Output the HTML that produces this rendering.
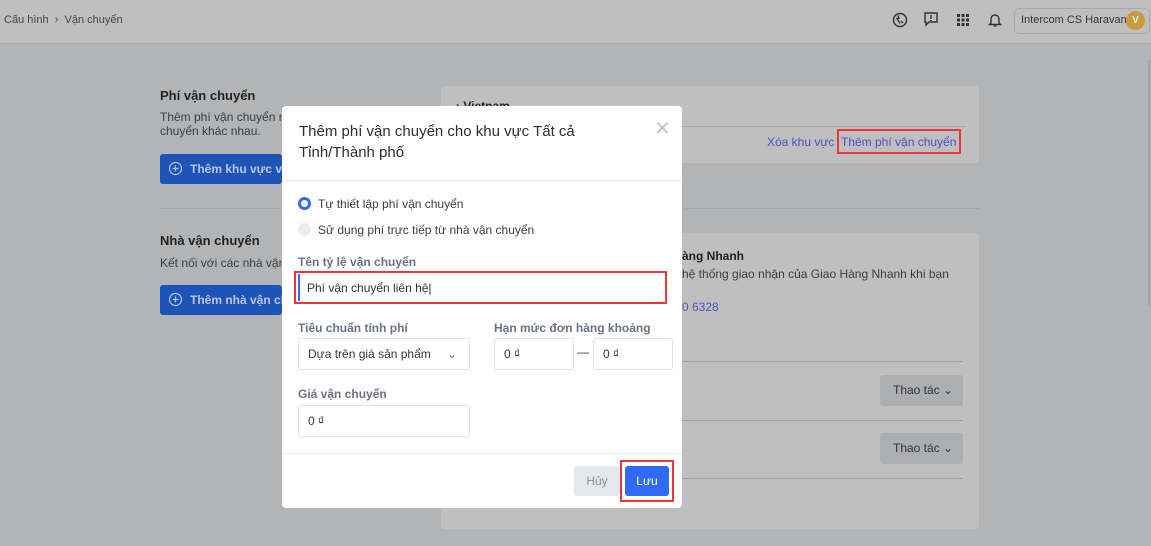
<!DOCTYPE html>
<html><head><meta charset="utf-8"><style>
*{box-sizing:border-box;margin:0;padding:0}
body{width:1151px;height:546px;overflow:hidden;background:#b3b4b6;font-family:"Liberation Sans","DejaVu Sans",sans-serif;position:relative;color:#1f2329}
.a{position:absolute}
.hdr{left:0;top:0;width:1151px;height:44px;background:#bfbfbf;border-bottom:1px solid #a9aaac}
.card{background:#bfbfbf;border-radius:4px}
.t{font-size:12px;color:#3a3d42}
.btn{background:#1e54b8;color:#b8c6e6;font-weight:bold;font-size:12px;border-radius:3px;height:30px;line-height:30px;padding-left:30px;overflow:hidden}
.modal{left:282px;top:106px;width:400px;height:402px;background:#fff;border-radius:4px}
.lbl{font-size:12px;font-weight:bold;color:#6a7283}
.inp{border:1px solid #dfe3e8;border-radius:3px;height:32px;font-size:12px;line-height:30px;padding-left:9px;color:#333}
</style></head><body>
<div class="a hdr"></div>
<div class="a t" style="left:4px;top:14px;font-size:11px;color:#444">Cấu hình &nbsp;›&nbsp; Vận chuyển</div>
<svg class="a" style="left:892px;top:12px" width="16" height="16" viewBox="0 0 16 16"><circle cx="8" cy="8" r="6.5" fill="none" stroke="#333" stroke-width="1.4"/><path d="M6 3.5l1 3h-2l3 5M9 9l2 2" stroke="#333" stroke-width="1.3" fill="none"/></svg>
<svg class="a" style="left:923px;top:11px" width="16" height="16" viewBox="0 0 16 16"><path d="M2 2h12v9H6l-3 3v-3H2z" fill="none" stroke="#333" stroke-width="1.4"/><path d="M8 4v4M8 9v1" stroke="#333" stroke-width="1.4"/></svg>
<svg class="a" style="left:957px;top:14px" width="12" height="12" viewBox="0 0 12 12" fill="#333"><rect x="0" y="0" width="3" height="3"/><rect x="4.5" y="0" width="3" height="3"/><rect x="9" y="0" width="3" height="3"/><rect x="0" y="4.5" width="3" height="3"/><rect x="4.5" y="4.5" width="3" height="3"/><rect x="9" y="4.5" width="3" height="3"/><rect x="0" y="9" width="3" height="3"/><rect x="4.5" y="9" width="3" height="3"/><rect x="9" y="9" width="3" height="3"/></svg>
<svg class="a" style="left:988px;top:12px" width="14" height="16" viewBox="0 0 14 16"><path d="M3 11V7a4 4 0 018 0v4l1.5 1.5h-11z" fill="none" stroke="#333" stroke-width="1.4"/><path d="M5.5 14h3" stroke="#333" stroke-width="1.4"/></svg>
<div class="a" style="left:1014px;top:8px;width:136px;height:26px;border:1px solid #a8a9ab;border-radius:5px"></div>
<div class="a" style="left:1021px;top:14px;font-size:11px;color:#333">Intercom CS Haravan</div>
<div class="a" style="left:1126px;top:11px;width:19px;height:19px;border-radius:50%;background:#cc9a3e;color:#eee;font-size:10px;font-weight:bold;text-align:center;line-height:19px">V</div>

<div class="a" style="left:160px;top:88px;font-size:13px;font-weight:bold;color:#222">Phí vận chuyển</div>
<div class="a t" style="left:160px;top:110px;width:125px;line-height:14px;overflow:hidden;white-space:nowrap">Thêm phí vận chuyển m<br>chuyển khác nhau.</div>
<div class="a btn" style="left:160px;top:154px;width:122px;white-space:nowrap">Thêm khu vực vận</div>
<svg class="a" style="left:168px;top:161px" width="15" height="15" viewBox="0 0 15 15"><circle cx="7.5" cy="7.5" r="6" fill="none" stroke="#b8c6e6" stroke-width="1.2"/><path d="M7.5 4.5v6M4.5 7.5h6" stroke="#b8c6e6" stroke-width="1.2"/></svg>
<div class="a" style="left:160px;top:208px;width:122px;height:1px;background:#a4a5a7"></div>
<div class="a" style="left:160px;top:233px;font-size:13px;font-weight:bold;color:#222">Nhà vận chuyển</div>
<div class="a t" style="left:160px;top:256px;width:125px;white-space:nowrap;overflow:hidden">Kết nối với các nhà vận</div>
<div class="a btn" style="left:160px;top:285px;width:122px;white-space:nowrap">Thêm nhà vận chuyển</div>
<svg class="a" style="left:168px;top:292px" width="15" height="15" viewBox="0 0 15 15"><circle cx="7.5" cy="7.5" r="6" fill="none" stroke="#b8c6e6" stroke-width="1.2"/><path d="M7.5 4.5v6M4.5 7.5h6" stroke="#b8c6e6" stroke-width="1.2"/></svg>

<div class="a card" style="left:441px;top:86px;width:538px;height:77px"></div>
<div class="a" style="left:456px;top:99px;font-size:12px;font-weight:bold;color:#222">› Vietnam</div>
<div class="a" style="left:441px;top:126px;width:525px;height:1px;background:#a9aaac"></div>
<div class="a" style="left:767px;top:135px;font-size:12px;color:#4a52c6">Xóa khu vực</div>
<div class="a" style="left:837px;top:129px;width:124px;height:25px;border:2px solid #e8363c"></div>
<div class="a" style="left:841px;top:135px;font-size:12px;color:#4a52c6">Thêm phí vận chuyển</div>
<div class="a" style="left:441px;top:208px;width:538px;height:1px;background:#a4a5a7"></div>
<div class="a card" style="left:441px;top:233px;width:538px;height:296px"></div>
<div class="a" style="left:682px;top:249px;font-size:12px;font-weight:bold;color:#222">àng Nhanh</div>
<div class="a t" style="left:682px;top:267px">hệ thống giao nhận của Giao Hàng Nhanh khi bạn</div>
<div class="a" style="left:682px;top:300px;font-size:12px;color:#4a52c6">0 6328</div>
<div class="a" style="left:441px;top:361px;width:522px;height:1px;background:#a0a1a3"></div>
<div class="a" style="left:880px;top:375px;width:83px;height:31px;background:#adaeb0;border-radius:3px;font-size:12px;color:#333;line-height:31px;padding-left:13px">Thao tác ⌄</div>
<div class="a" style="left:441px;top:420px;width:522px;height:1px;background:#a0a1a3"></div>
<div class="a" style="left:880px;top:433px;width:83px;height:31px;background:#adaeb0;border-radius:3px;font-size:12px;color:#333;line-height:31px;padding-left:13px">Thao tác ⌄</div>
<div class="a" style="left:441px;top:478px;width:522px;height:1px;background:#a0a1a3"></div>
<div class="a" style="left:1148px;top:60px;width:2px;height:246px;background:#a0a1a3"></div>

<div class="a modal"></div>
<div class="a" style="left:299px;top:121px;font-size:15px;line-height:21px;color:#2a2e35;width:300px">Thêm phí vận chuyển cho khu vực Tất cả Tỉnh/Thành phố</div>
<div class="a" style="left:654px;top:119px;font-size:20px;color:#c4c8cd;line-height:20px">✕</div>
<div class="a" style="left:282px;top:180px;width:400px;height:1px;background:#e6e9ed"></div>
<div class="a" style="left:298px;top:197px;width:13px;height:13px;border-radius:50%;border:3.5px solid #2f6bf5"></div>
<div class="a t" style="left:318px;top:197px">Tự thiết lập phí vận chuyển</div>
<div class="a" style="left:298px;top:223px;width:13px;height:13px;border-radius:50%;background:#ececee"></div>
<div class="a t" style="left:318px;top:223px">Sử dụng phí trực tiếp từ nhà vận chuyển</div>
<div class="a lbl" style="left:298px;top:255px">Tên tỷ lệ vận chuyển</div>
<div class="a" style="left:294px;top:271px;width:373px;height:33px;border:2px solid #e8363c"></div>
<div class="a" style="left:298px;top:274px;width:2px;height:27px;background:#2f6bf5"></div>
<div class="a" style="left:307px;top:281px;font-size:12px;color:#333">Phí vận chuyển liên hệ|</div>
<div class="a lbl" style="left:298px;top:321px">Tiêu chuẩn tính phí</div>
<div class="a inp" style="left:298px;top:338px;width:172px">Dựa trên giá sản phẩm<span style="position:absolute;right:12px;color:#777">⌄</span></div>
<div class="a lbl" style="left:494px;top:321px">Hạn mức đơn hàng khoảng</div>
<div class="a inp" style="left:494px;top:338px;width:80px">0 ₫</div>
<div class="a" style="left:577px;top:345px;font-size:12px;color:#333">—</div>
<div class="a inp" style="left:593px;top:338px;width:80px">0 ₫</div>
<div class="a lbl" style="left:298px;top:387px">Giá vận chuyển</div>
<div class="a inp" style="left:298px;top:405px;width:172px">0 ₫</div>
<div class="a" style="left:282px;top:453px;width:400px;height:1px;background:#e6e9ed"></div>
<div class="a" style="left:574px;top:466px;width:46px;height:30px;background:#e4e7eb;border-radius:3px;color:#8a909b;font-size:12px;text-align:center;line-height:30px">Hủy</div>
<div class="a" style="left:620px;top:460px;width:54px;height:42px;border:2px solid #e8363c"></div>
<div class="a" style="left:625px;top:466px;width:44px;height:30px;background:#2f6bf5;border-radius:3px;color:#fff;font-size:12px;text-align:center;line-height:30px">Lưu</div>
</body></html>
